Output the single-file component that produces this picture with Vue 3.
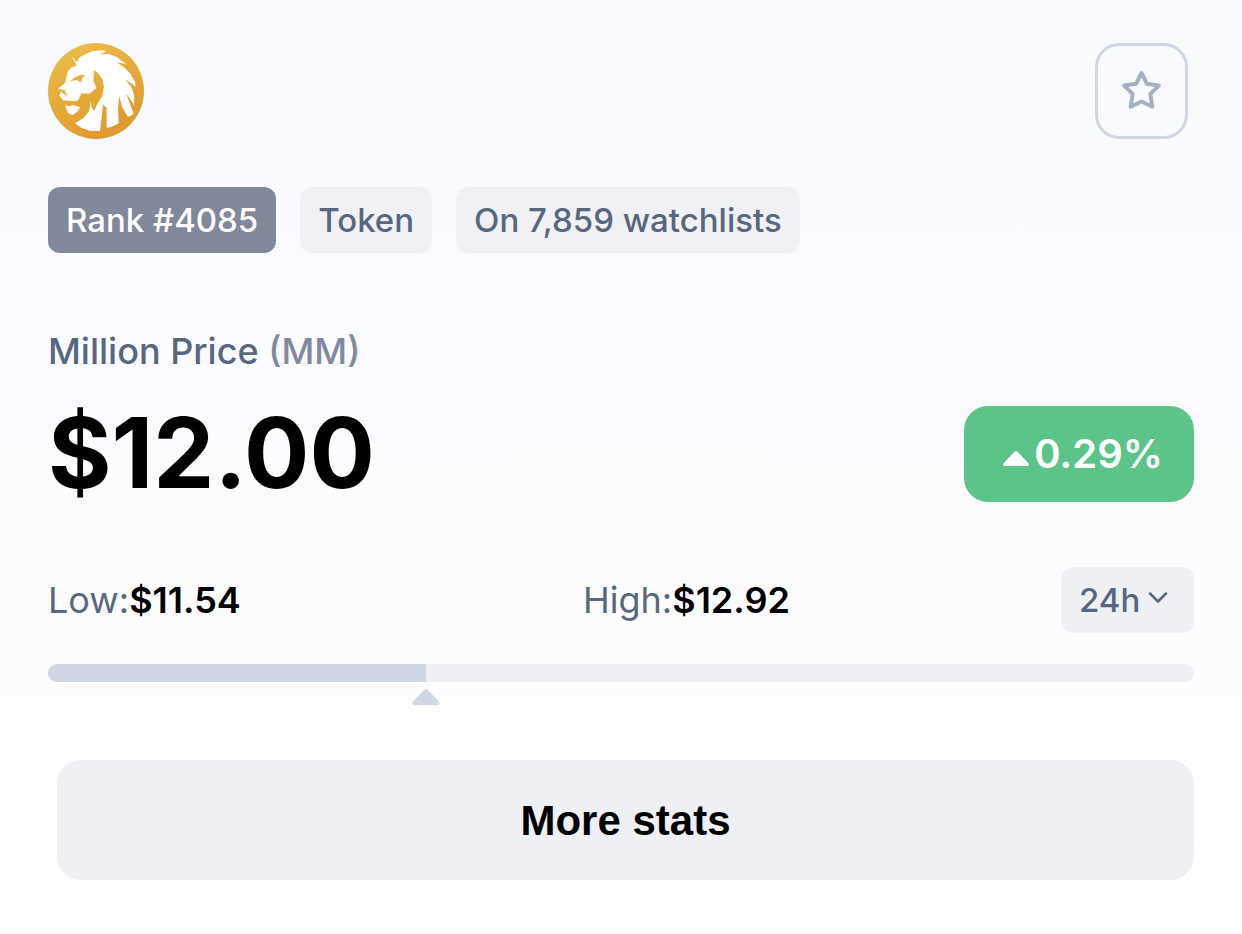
<script setup>
import { ref } from 'vue'

const tags = ['Token', 'On 7,859 watchlists']
const low = '$11.54'
const high = '$12.92'
const rangePosition = 33
const period = ref('24h')
const watched = ref(false)
</script>

<template>
  <main class="coin">
    <header class="head">
      <svg class="logo" viewBox="24 21 288 288" role="img" aria-label="Million Price logo">
        <defs>
          <linearGradient id="gold" x1="0" y1="0" x2="0.5" y2="1">
            <stop offset="0" stop-color="#ecc04a" />
            <stop offset="1" stop-color="#e09a2d" />
          </linearGradient>
        </defs>
        <circle cx="168" cy="165" r="144" fill="url(#gold)" />
        <path
          fill="#fff"
          d="M99 63 L107 77 L119 76 L112 72 L120 64 L135 55 L158 46 L190 43 L198 47 L176 55 L207 54 L232 64 L258 84 L229 79 L252 94 L270 112 L284 136 L288 152 L256 130 L275 155 L283 180 L282 208 L270 188 L258 172 L280 230 L278 236 L264 242 L246 213 L238 180 L234 215 L236 262 L218 271 L200 276 L200 215 L189 206 L180 285 L150 284 L125 276 L105 262 L130 246 L147 226 L152 194 L155 215 L163 224 L172 203 L186 182 L192 153 L187 130 L172 109 L162 102 L160 133 L169 156 L148 173 L124 172 L115 192 L108 196 L69 193 L58 178 L64 168 L54 158 L75 141 L84 105 L95 94 L110 90 L106 79 L98 69 Z"
        />
        <path fill="#e8b03f" d="M136 117 L121 117 L107 123 L90 136 L111 132 L117 137 L124 137 L127 126 Z" />
        <path fill="#e8b03f" d="M54 158 L72 162 L80 159 L74 165 L78 172 L84 177 L76 178 L64 168 Z" />
        <path fill="#fff" d="M75 208 L89 211 L98 207 L120 214 L113 226 L99 237 L84 232 Z" />
      </svg>
      <button
        class="star"
        type="button"
        aria-label="Add to watchlist"
        :aria-pressed="watched"
        @click="watched = !watched"
      >
        <svg viewBox="0 0 42 42" aria-hidden="true">
          <path
            d="M20.5 3 L25.8 13.7 L37.9 15.6 L29.3 23.9 L31.3 36.7 L20.5 31.5 L9.7 36.7 L11.7 23.9 L3.1 15.6 L15.2 13.7 Z"
            fill="none"
            stroke="#a6b0c3"
            stroke-width="4"
            stroke-linejoin="round"
          />
        </svg>
      </button>
    </header>

    <div class="tags">
      <span class="tag rank">Rank #4085</span>
      <span v-for="tag in tags" :key="tag" class="tag">{{ tag }}</span>
    </div>

    <h1 class="name">Million Price <span class="symbol">(MM)</span></h1>

    <div class="quote">
      <strong class="price">$12.00</strong>
      <span class="change">
        <svg class="up" viewBox="0 0 26 15" aria-hidden="true">
          <path d="M11.2 0.9 Q13 -0.7 14.8 0.9 L25.2 11.9 Q26.8 15 24 15 L2 15 Q-0.8 15 0.8 11.9 Z" fill="#fff" />
        </svg>
        0.29%
      </span>
    </div>

    <div class="stats">
      <div class="bounds">
        <span class="bound">Low:<b>{{ low }}</b></span>
        <span class="bound">High:<b>{{ high }}</b></span>
      </div>
      <div class="period">
        <select v-model="period" aria-label="Period">
          <option>24h</option>
          <option>7d</option>
          <option>30d</option>
        </select>
        <svg class="chevron" viewBox="0 0 20 12" aria-hidden="true">
          <path d="M2 1.5 L10 9.5 L18 1.5" fill="none" stroke="#58667e" stroke-width="2.5" stroke-linecap="round" stroke-linejoin="round" />
        </svg>
      </div>
    </div>

    <div class="range">
      <div class="track">
        <div class="fill" :style="{ width: rangePosition + '%' }"></div>
      </div>
      <svg class="marker" :style="{ left: rangePosition + '%' }" viewBox="0 0 28 16" aria-hidden="true">
        <path d="M12.2 0.9 Q14 -0.7 15.8 0.9 L27 12.4 Q29 16 25.5 16 L2.5 16 Q-1 16 1 12.4 Z" fill="#cfd6e4" />
      </svg>
    </div>

    <button class="more" type="button">More stats</button>
  </main>
</template>

<style>
body {
  margin: 0;
}
</style>

<style scoped>
.coin {
  box-sizing: border-box;
  min-height: 100vh;
  padding: 43px 48px 48px;
  background: linear-gradient(#f9fafe, #fefeff);
  color: #58667e;
  font-family: Inter, "Liberation Sans", sans-serif;
  font-size: 36px;
  line-height: 54px;
}

.coin button,
.coin select {
  cursor: pointer;
}

.head {
  display: flex;
  justify-content: space-between;
  padding-right: 6px;
}

.logo {
  width: 96px;
  height: 96px;
}

.star {
  display: grid;
  place-items: center;
  box-sizing: border-box;
  width: 93px;
  height: 96px;
  padding: 0;
  border: 3px solid #cfd6e4;
  border-radius: 24px;
  background: transparent;
}

.star svg {
  width: 42px;
  height: 42px;
}

.tags {
  display: flex;
  gap: 24px;
  margin-top: 48px;
}

.tag {
  padding: 6px 18px;
  border-radius: 12px;
  background: #eff1f4;
  font-size: 33px;
  font-weight: 500;
  white-space: nowrap;
}

.rank {
  background: #818899;
  color: #fff;
}

.name {
  margin: 71px 0 0;
  font-size: 36px;
  font-weight: 500;
}

.symbol {
  color: #808a9d;
}

.quote {
  display: flex;
  align-items: flex-start;
  justify-content: space-between;
  margin-top: 28px;
}

.price {
  color: #000;
  font-size: 97px;
  font-weight: 700;
  line-height: 94px;
}

.change {
  display: flex;
  align-items: center;
  gap: 5px;
  padding: 21px 31px 21px 39px;
  border-radius: 24px;
  background: #5cc489;
  color: #fff;
  font-size: 40px;
  font-weight: 600;
}

.up {
  width: 26px;
  height: 15px;
  margin-top: 9px;
}

.stats {
  display: flex;
  align-items: center;
  justify-content: space-between;
  margin-top: 65px;
}

.bounds {
  display: grid;
  flex: 1;
  grid-template-columns: 1fr 1fr;
  gap: 57px;
}

.bound b {
  color: #000;
  font-weight: 600;
}

.period {
  position: relative;
}

.period select {
  display: block;
  box-sizing: border-box;
  width: 133px;
  height: 66px;
  padding: 0 18px;
  border: 0;
  border-radius: 12px;
  background: #eff0f4;
  color: #58667e;
  font-family: inherit;
  font-size: 33px;
  font-weight: 500;
  appearance: none;
}

.chevron {
  position: absolute;
  top: 25px;
  right: 26px;
  width: 20px;
  height: 12px;
  pointer-events: none;
}

.range {
  position: relative;
  margin-top: 31px;
}

.track {
  height: 18px;
  overflow: hidden;
  border-radius: 9px;
  background: #eff0f4;
}

.fill {
  height: 100%;
  background: #cfd6e4;
}

.marker {
  position: absolute;
  top: 25px;
  width: 28px;
  height: 16px;
  margin-left: -14px;
}

.more {
  display: block;
  width: calc(100% - 9px);
  height: 120px;
  margin: 78px 0 0 9px;
  padding: 2px 6px 0;
  border: 0;
  border-radius: 24px;
  background: #eff0f4;
  color: #000;
  font-family: "Liberation Sans", Arial, sans-serif;
  font-size: 42px;
  font-weight: 700;
}
</style>
